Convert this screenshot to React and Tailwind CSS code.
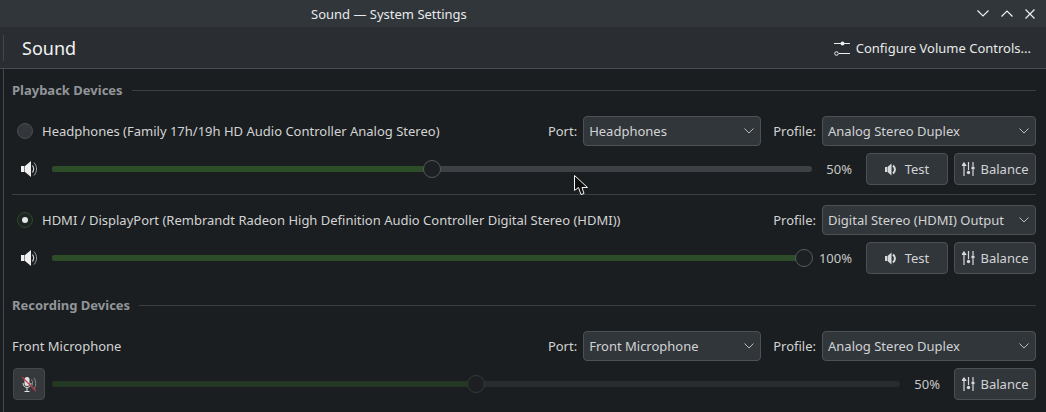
const font = { fontFamily: '"Noto Sans", sans-serif' }

const SpeakerIcon = ({ className = 'w-4 h-4' }) => (
  <svg viewBox="0 0 16 16" className={className} fill="none">
    <path d="M0 5h3.5v6H0z" fill="#f0f0f0" />
    <path d="M4 5 L10 0 V16 L4 11 Z" fill="#f0f0f0" />
    <path d="M11.5 4.5 C12.8 6.5 12.8 9.5 11.5 11.5" stroke="#d0d2d3" strokeWidth="1.2" />
    <path d="M13 1.5 C16.4 5.5 16.4 10.5 13 14.5" stroke="#9a9d9f" strokeWidth="1" />
  </svg>
)

const TestSpeaker = () => (
  <svg viewBox="0 0 12 13" className="w-[12px] h-[13px]" fill="none">
    <path d="M0 4h2v5H0z" fill="#d8d9da" />
    <path d="M2.5 4 L6.5 0.5 V12.5 L2.5 9 Z" fill="#d8d9da" />
    <path d="M8 2.5 C10.6 5 10.6 8 8 10.5" stroke="#d8d9da" strokeWidth="2" />
  </svg>
)

const BalanceIcon = () => (
  <svg viewBox="0 0 13 14" className="w-[13px] h-[14px]" fill="none" stroke="#d8d9da" strokeWidth="1.2">
    <path d="M2 4v10M6.5 0v8M11 0v4M11 8v6" />
    <path d="M0.3 3.5 L2 1 L3.7 3.5 Z" fill="#d8d9da" />
    <circle cx="6.5" cy="10.5" r="1.7" fill="#d8d9da" stroke="none" />
    <circle cx="11" cy="6" r="1.7" fill="#d8d9da" stroke="none" />
  </svg>
)

const ConfigureIcon = () => (
  <svg viewBox="0 0 16 16" className="w-4 h-4" fill="none" stroke="#eceded">
    <path d="M0 3.5h16M5 13.5h11" />
    <circle cx="8.5" cy="3.5" r="2" fill="#eceded" stroke="none" />
    <circle cx="2.5" cy="13.5" r="1.8" />
  </svg>
)

const MutedMicIcon = () => (
  <svg viewBox="0 0 16 16" className="w-4 h-4" fill="none">
    <rect x="3.5" y="1" width="5" height="9" rx="2.5" fill="#e0e1e2" />
    <path d="M2 7c0 6 8 6 8 0M6 12v3M3.5 15.5h5" stroke="#e0e1e2" strokeWidth="1" />
    <path d="M10.5 3.5c1.5 2 1.5 5 0 7M13 2c2.2 3 2.2 8 0 11" stroke="#85888a" strokeWidth="1" />
    <path d="M1 1 L15 15" stroke="#c2394a" strokeWidth="1.1" />
  </svg>
)

const ChevronDown = () => (
  <svg viewBox="0 0 10 6" className="w-[10px] h-[6px]" fill="none" stroke="#b9bbbc">
    <path d="M0.5 0.5 L5 5 L9.5 0.5" />
  </svg>
)

const Combo = ({ value, className }) => (
  <div className={`h-[30px] flex items-center justify-between pl-[5px] pr-[6px] rounded-[4px] border border-[#4d5155] bg-[#31363b] text-[#d2d3d4] ${className}`}>
    <span>{value}</span>
    <ChevronDown />
  </div>
)

const Label = ({ children }) => <span className="text-[#d2d3d4] mr-[6px]">{children}</span>

const Button = ({ icon, text, gap, className }) => (
  <div className={`h-[32px] flex items-center justify-center rounded-[4px] border border-[#4d5155] bg-[#31363b] text-[#d2d3d4] ${gap} ${className}`}>
    {icon}
    <span>{text}</span>
  </div>
)

const Slider = ({ value, dim }) => (
  <div className="relative flex-1 h-[18px] flex items-center">
    <div className={`w-full h-[6px] rounded-full ${dim ? 'bg-[#292c2f]' : 'bg-[#3d4145]'}`}>
      <div
        className={`h-full rounded-full ${dim ? 'bg-[#233722]' : 'bg-[#2d4d29]'}`}
        style={{ width: `${value}%` }}
      />
    </div>
    <div
      className={`absolute w-[18px] h-[18px] -ml-[9px] rounded-full bg-[#1d2023] border ${dim ? 'border-[#36393c]' : 'border-[#55595d]'}`}
      style={{ left: value === 100 ? 'calc(100% - 8px)' : `${value}%` }}
    />
  </div>
)

const Heading = ({ children, className = '' }) => (
  <div className={`h-[42px] flex items-center gap-[9px] font-bold text-[#92959a] ${className}`}>
    <span>{children}</span>
    <div className="flex-1 h-px bg-[#3b3f43]" />
  </div>
)

const Radio = ({ checked }) => (
  <div className={`w-[16px] h-[16px] rounded-full flex items-center justify-center border ${checked ? 'border-[#2c4a2c] bg-[#1d2522]' : 'border-[#4a4e52] bg-[#33373b]'}`}>
    {checked && <div className="w-[6px] h-[6px] rounded-full bg-[#e4e5e5]" />}
  </div>
)

const Percent = ({ children, className }) => (
  <span className={`text-[#c6c8c9] text-right ${className}`}>{children}</span>
)

export default function App() {
  return (
    <div className="w-[1046px] h-[412px] overflow-hidden flex flex-col bg-[#1b1e20] text-[13px] leading-[18px]" style={font}>
      {/* titlebar */}
      <div className="relative h-[27px] flex items-center bg-[#31363b] text-[#e8e9e9]">
        <span className="ml-[311px]">Sound — System Settings</span>
        <div className="ml-auto mr-[11px] flex items-center gap-[12px]">
          <svg viewBox="0 0 12 7" className="w-[12px] h-[7px]" fill="none" stroke="#f0f0f0" strokeWidth="1.2"><path d="M0.5 0.5 L6 6 L11.5 0.5" /></svg>
          <svg viewBox="0 0 12 7" className="w-[12px] h-[7px]" fill="none" stroke="#f0f0f0" strokeWidth="1.2"><path d="M0.5 6.5 L6 1 L11.5 6.5" /></svg>
          <svg viewBox="0 0 10 10" className="w-[10px] h-[10px]" fill="none" stroke="#f0f0f0" strokeWidth="1.2"><path d="M0.5 0.5 L9.5 9.5 M9.5 0.5 L0.5 9.5" /></svg>
        </div>
      </div>

      {/* toolbar */}
      <div className="h-[42px] flex items-center bg-[#2a2e32] border-b border-[#4a4e52]">
        <div className="ml-[3px] w-px h-[26px] bg-[#43474b]" />
        <span className="ml-[18px] text-[18px] leading-[24px] text-[#f2f2f2]">Sound</span>
        <div className="ml-auto mr-[15px] flex items-center gap-[6px] text-[#e8e9e9]">
          <ConfigureIcon />
          <span>Configure Volume Controls...</span>
        </div>
      </div>

      {/* content */}
      <div className="flex-1 min-h-0 ml-[3px] border-l border-[#43474b] pl-[8px] pr-[10px]">
        <Heading>Playback Devices</Heading>

        <div className="mt-[5px] flex flex-col gap-[7px]">
          <div className="flex items-center">
            <div className="ml-[5px] mr-[9px]"><Radio /></div>
            <span className="text-[#d2d3d4]">Headphones (Family 17h/19h HD Audio Controller Analog Stereo)</span>
            <div className="ml-auto flex items-center">
              <Label>Port:</Label>
              <Combo value="Headphones" className="w-[178px]" />
              <div className="w-[12px]" />
              <Label>Profile:</Label>
              <Combo value="Analog Stereo Duplex" className="w-[214px]" />
            </div>
          </div>
          <div className="flex items-center">
            <div className="ml-[9px] w-[31px]"><SpeakerIcon /></div>
            <Slider value={50} />
            <Percent className="w-[40px]">50%</Percent>
            <Button icon={<TestSpeaker />} text="Test" gap="gap-[8px]" className="ml-[14px] w-[82px]" />
            <Button icon={<BalanceIcon />} text="Balance" gap="gap-[6px]" className="ml-[6px] w-[82px]" />
          </div>
        </div>

        <div className="h-px mt-[9px] mb-[10px] bg-[#3b3f43]" />

        <div className="flex flex-col gap-[7px]">
          <div className="flex items-center">
            <div className="ml-[5px] mr-[9px]"><Radio checked /></div>
            <span className="text-[#d2d3d4]">HDMI / DisplayPort (Rembrandt Radeon High Definition Audio Controller Digital Stereo (HDMI))</span>
            <div className="ml-auto flex items-center">
              <Label>Profile:</Label>
              <Combo value="Digital Stereo (HDMI) Output" className="w-[214px]" />
            </div>
          </div>
          <div className="flex items-center">
            <div className="ml-[9px] w-[31px]"><SpeakerIcon /></div>
            <Slider value={100} />
            <Percent className="w-[40px]">100%</Percent>
            <Button icon={<TestSpeaker />} text="Test" gap="gap-[8px]" className="ml-[14px] w-[82px]" />
            <Button icon={<BalanceIcon />} text="Balance" gap="gap-[6px]" className="ml-[6px] w-[82px]" />
          </div>
        </div>

        <Heading className="mt-[10px]">Recording Devices</Heading>

        <div className="mt-[5px] flex flex-col gap-[7px]">
          <div className="flex items-center">
            <span className="text-[#d2d3d4]">Front Microphone</span>
            <div className="ml-auto flex items-center">
              <Label>Port:</Label>
              <Combo value="Front Microphone" className="w-[178px]" />
              <div className="w-[12px]" />
              <Label>Profile:</Label>
              <Combo value="Analog Stereo Duplex" className="w-[214px]" />
            </div>
          </div>
          <div className="flex items-center">
            <div className="w-[32px] h-[32px] ml-px mr-[7px] flex items-center justify-center rounded-[4px] border border-[#45484b] bg-[#36393c]">
              <MutedMicIcon />
            </div>
            <Slider value={50} dim />
            <Percent className="w-[40px]">50%</Percent>
            <Button icon={<BalanceIcon />} text="Balance" gap="gap-[6px]" className="ml-[14px] w-[82px]" />
          </div>
        </div>
      </div>

      {/* mouse pointer */}
      <svg viewBox="0 0 14 21" className="absolute left-[574px] top-[175px] w-[14px] h-[21px]">
        <path d="M0.5 0.5 V15.5 L4.5 12.5 L7 19.5 L10 18.5 L8 12.5 H13.5 Z" fill="#0d0d0d" stroke="#f4f4f4" strokeWidth="1" />
      </svg>
    </div>
  )
}
